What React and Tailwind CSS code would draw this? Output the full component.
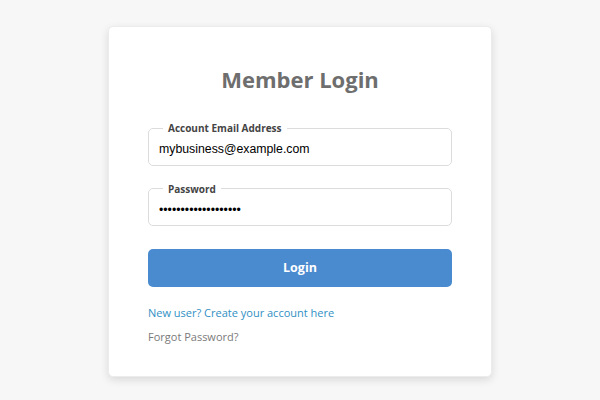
import { useState } from 'react';

function Field({ label, type, value, onChange }) {
  return (
    <fieldset className="border border-[#dcdcdc] rounded-[5px] px-[10px] pb-[2px] m-0">
      <legend className="ml-[4px] px-[5px] text-[10px] leading-[14px] font-bold text-[#444] font-['Open_Sans',sans-serif]">
        {label}
      </legend>
      <input
        type={type}
        value={value}
        onChange={e => onChange(e.target.value)}
        className="w-full h-[27px] bg-transparent outline-none text-[12.3px] text-black font-['Liberation_Sans',Arial,sans-serif]"
      />
    </fieldset>
  );
}

export default function App() {
  const [email, setEmail] = useState("mybusiness@example.com");
  const [password, setPassword] = useState("mypassword123456789");

  return (
    <div className="min-h-screen bg-[#f7f7f7] pt-[26px] font-['Open_Sans',sans-serif]">
      <div className="w-[384px] h-[351px] mx-auto bg-white rounded-[5px] border border-[#ececec] shadow-[0_3px_8px_rgba(0,0,0,0.12)] px-[39px] pt-[36px]">
        <h1 className="text-center text-[22px] leading-[32px] font-bold text-[#6e6e6e]">Member Login</h1>

        <div className="mt-[26px]">
          <Field label="Account Email Address" type="email" value={email} onChange={setEmail} />
        </div>
        <div className="mt-[16px]">
          <Field label="Password" type="password" value={password} onChange={setPassword} />
        </div>

        <button
          type="button"
          className="mt-[23px] w-full h-[38px] rounded-[5px] bg-[#4a8bd0] text-white text-[12.5px] font-bold"
        >
          Login
        </button>

        <div className="mt-[17px] text-[11px] leading-[18px]">
          <a href="#" className="text-[#3190c4]">New user? Create your account here</a>
        </div>
        <div className="mt-[6px] text-[11px] leading-[18px]">
          <a href="#" className="text-[#7a7a7a]">Forgot Password?</a>
        </div>
      </div>
    </div>
  );
}
